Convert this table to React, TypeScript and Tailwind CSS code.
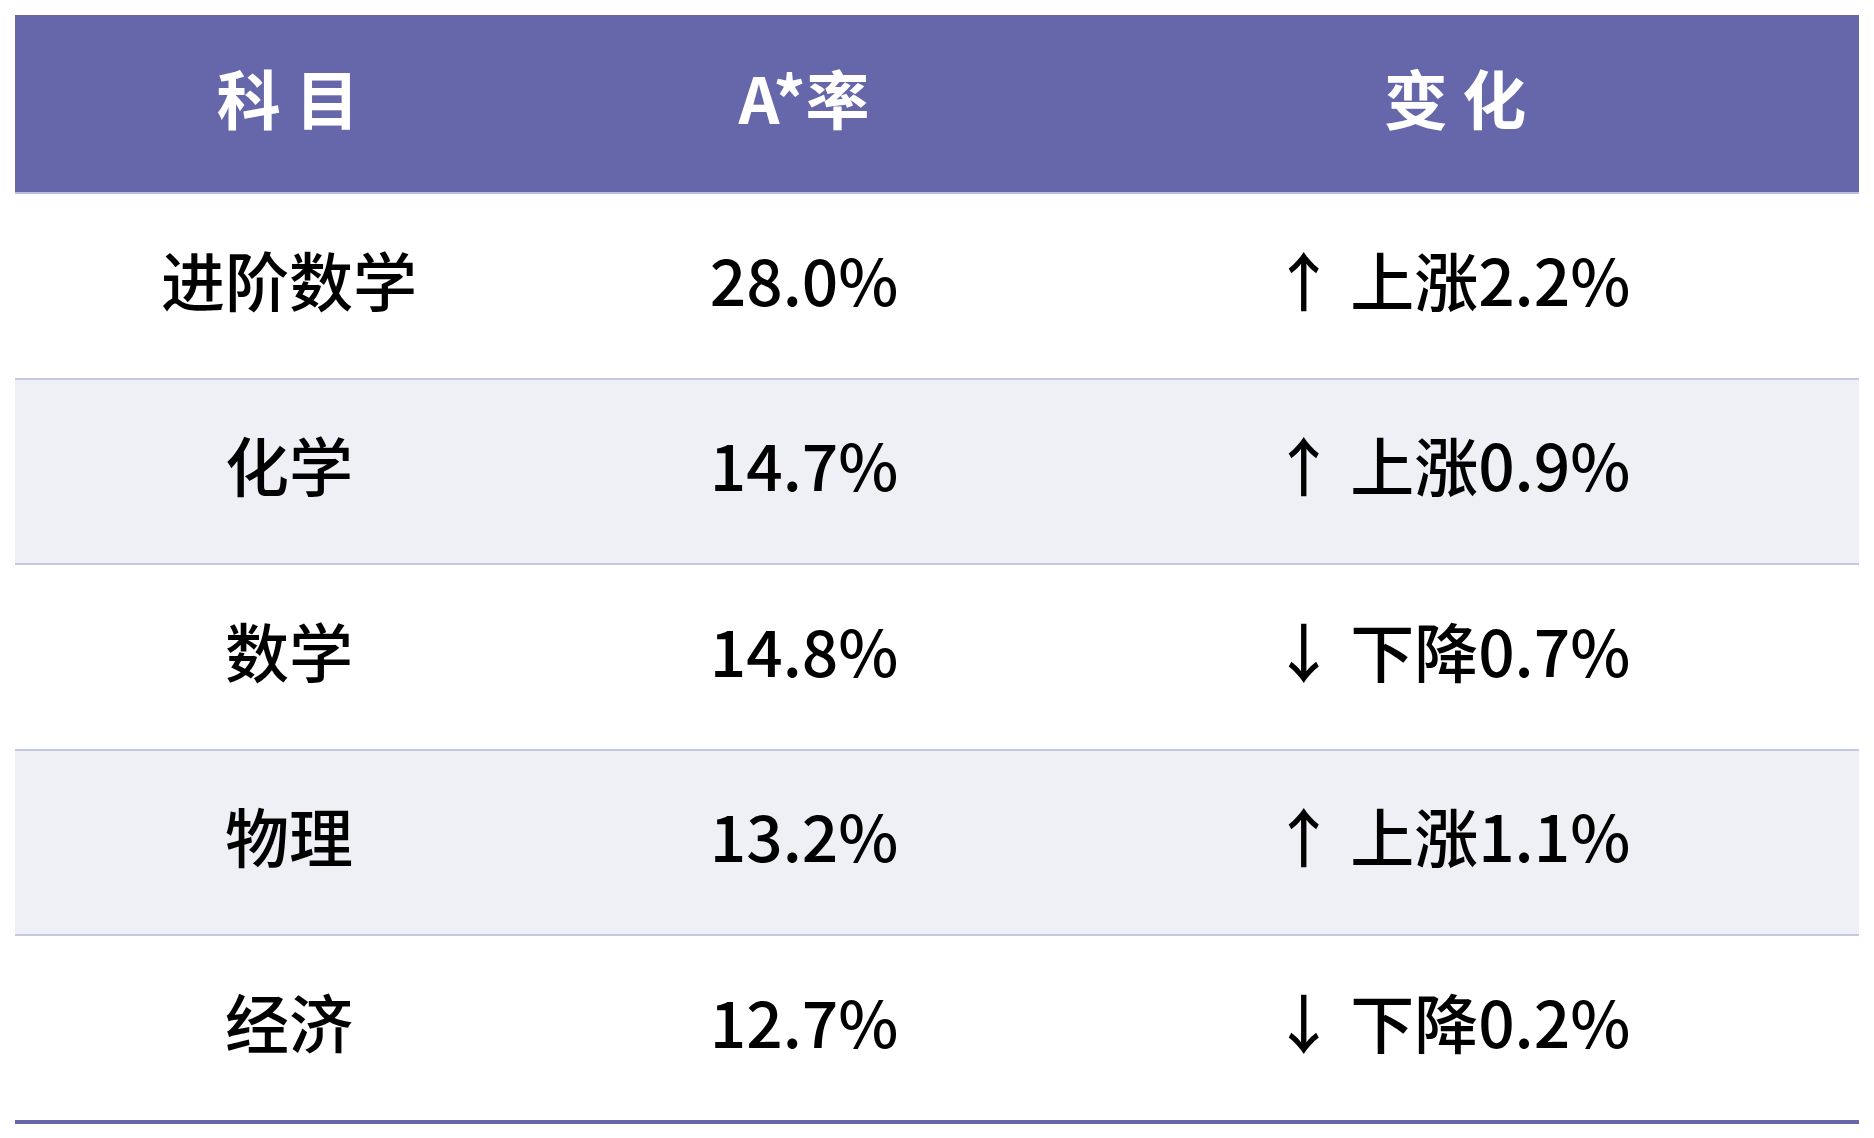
import React from 'react';

const rows = [
    { subject: '进阶数学', rate: '28.0%', change: '↑ 上涨2.2%' },
    { subject: '化学', rate: '14.7%', change: '↑ 上涨0.9%' },
    { subject: '数学', rate: '14.8%', change: '↓ 下降0.7%' },
    { subject: '物理', rate: '13.2%', change: '↑ 上涨1.1%' },
    { subject: '经济', rate: '12.7%', change: '↓ 下降0.2%' },
];

const font = { fontFamily: '"Noto Sans CJK SC", "Noto Sans", sans-serif' };

export default function App() {
    return (
        <div className="min-h-screen bg-white p-[15px]" style={font}>
            <div className="w-[1844px]">
                <div className="grid grid-cols-[542px_494px_808px] h-[179px] bg-[#6667aa] border-b-2 border-[#b9bde0] text-white font-bold text-[64px] leading-none">
                    <div className="flex items-center justify-center pb-4 pl-[4px]">科 目</div>
                    <div className="flex items-center justify-center pb-4">A*率</div>
                    <div className="flex items-center justify-center pb-4">变 化</div>
                </div>
                {rows.map((r, i) => (
                    <div
                        key={r.subject}
                        className={`grid grid-cols-[542px_494px_808px] text-black font-medium text-[64px] leading-none ${i % 2 === 1 ? 'bg-[#efeff6]' : 'bg-white'} ${i === rows.length - 1 ? 'h-[188px] border-b-4 border-[#6667aa]' : 'h-[185.5px] border-b-2 border-[#c6c7e2]'}`}
                    >
                        <div className="flex items-center justify-center pb-4 pl-[6px]">{r.subject}</div>
                        <div className="flex items-center justify-center pb-4">{r.rate}</div>
                        <div className="flex items-center justify-center pb-4 pr-2">{r.change}</div>
                    </div>
                ))}
            </div>
        </div>
    );
}
